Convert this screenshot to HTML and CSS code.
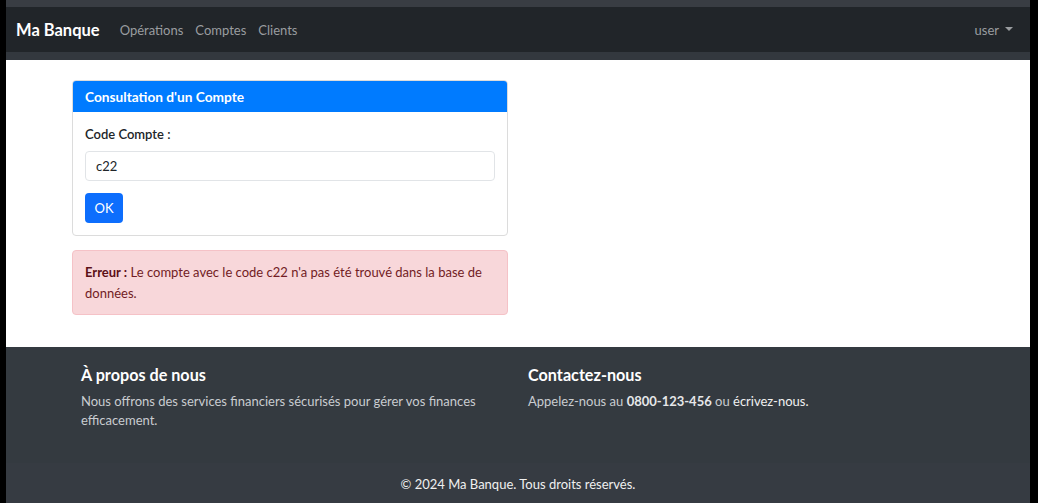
FILE: index.html
```html
<!DOCTYPE html>
<html lang="fr">
<head>
<meta charset="utf-8">
<title>Ma Banque</title>
<link rel="stylesheet" href="styles.css">
</head>
<body>
<div class="frame">
  <div class="topband"></div>
  <nav class="navbar">
    <div class="nav-left">
      <a class="brand" href="#">Ma Banque</a>
      <a class="nav-link" href="#">Opérations</a>
      <a class="nav-link" href="#">Comptes</a>
      <a class="nav-link" href="#">Clients</a>
    </div>
    <a class="nav-link user" href="#">user <span class="caret"></span></a>
  </nav>
  <div class="navband"></div>
  <main class="main">
    <div class="col">
      <div class="card">
        <div class="card-header">Consultation d'un Compte</div>
        <div class="card-body">
          <label class="label" for="code">Code Compte :</label>
          <div class="input" id="code">c22</div>
          <button class="btn">OK</button>
        </div>
      </div>
      <div class="alert"><strong>Erreur :</strong> Le compte avec le code c22 n'a pas été trouvé dans la base de données.</div>
    </div>
  </main>
  <footer class="footer">
    <div class="footer-row">
      <div class="footer-col">
        <h5 class="footer-title">À propos de nous</h5>
        <p class="footer-text">Nous offrons des services financiers sécurisés pour gérer vos finances efficacement.</p>
      </div>
      <div class="footer-col">
        <h5 class="footer-title">Contactez-nous</h5>
        <p class="footer-text">Appelez-nous au <strong class="phone">0800-123-456</strong> ou <a class="mail" href="#">écrivez-nous.</a></p>
      </div>
    </div>
    <div class="copyright">© 2024 Ma Banque. Tous droits réservés.</div>
  </footer>
</div>
</body>
</html>
```

FILE: styles.css
```css
* { box-sizing: border-box; }
html, body { margin: 0; padding: 0; }
body {
  background: #000;
  font-family: Lato, "Noto Sans", sans-serif;
  font-size: 13px;
  line-height: 21px;
  color: #212529;
}
.frame {
  margin: 0 8px 0 6px;
  height: 503px;
  display: flex;
  flex-direction: column;
  background: #fff;
}
.topband { height: 7px; background: #393d43; }
.navbar {
  height: 45px;
  background: #212529;
  display: flex;
  align-items: center;
  justify-content: space-between;
  padding: 2px 17px 0 10px;
}
.nav-left { display: flex; align-items: center; }
.brand {
  color: #fff;
  font-weight: 700;
  font-size: 16.5px;
  text-decoration: none;
  margin-right: 14px;
}
.nav-link {
  color: #9a9da0;
  text-decoration: none;
  padding: 0 6px;
  font-size: 13px;
}
.user { display: flex; align-items: center; padding-right: 0; }
.caret {
  display: inline-block;
  margin-left: 6px;
  border-top: 4px solid #9a9da0;
  border-left: 4px solid transparent;
  border-right: 4px solid transparent;
  width: 0; height: 0;
  position: relative; top: -2px;
}
.navband { height: 8px; background: #33383e; }
.main {
  height: 287px;
  padding: 20px 0 0 66px;
  background: #fff;
}
.col { width: 436px; display: flex; flex-direction: column; gap: 14px; }
.card {
  border: 1px solid #dcdcdc;
  border-radius: 4px;
  overflow: hidden;
}
.card-header {
  background: #007bff;
  color: #fff;
  font-weight: 700;
  font-size: 13.7px;
  height: 31px;
  display: flex;
  align-items: center;
  padding: 0 12px 1px;
}
.card-body {
  padding: 12px;
  display: flex;
  flex-direction: column;
  align-items: flex-start;
}
.label { font-weight: 600; line-height: 21px; }
.input {
  margin-top: 6px;
  width: 100%;
  height: 30px;
  border: 1px solid #e1e4e7;
  border-radius: 4px;
  padding: 0 10px;
  display: flex;
  align-items: center;
}
.btn {
  margin-top: 12px;
  height: 30px;
  width: 38px;
  border: none;
  border-radius: 4px;
  background: #0d6efd;
  color: #fff;
  font: inherit;
  padding: 0;
}
.alert {
  background: #f8d7da;
  border: 1px solid #f5c2c7;
  border-radius: 4px;
  color: #721c24;
  padding: 11px 12px 10px;
  line-height: 21px;
}
.alert strong { color: #5c1017; }
.footer {
  flex: 1;
  background: #343a40;
  display: flex;
  flex-direction: column;
  color: #c9ccd0;
}
.footer-row {
  display: flex;
  padding: 16px 0 0 75px;
  height: 116px;
}
.footer-col { width: 447px; }
.footer-title {
  margin: 0;
  color: #fff;
  font-size: 16.2px;
  font-weight: 700;
  line-height: 24px;
}
.footer-text { margin: 5px 0 0; line-height: 19px; }
.phone { color: #e6e7e9; }
.mail { color: #f0f0f0; text-decoration: none; }
.copyright {
  flex: 1;
  background: #363b42;
  color: #f0f0f0;
  display: flex;
  align-items: center;
  justify-content: center;
  padding-top: 2px;
}
```
